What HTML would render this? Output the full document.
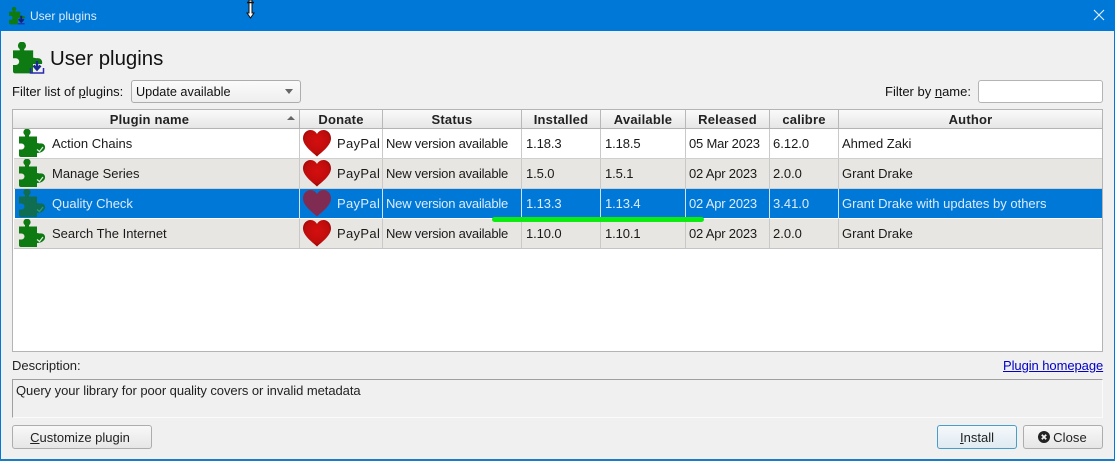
<!DOCTYPE html>
<html><head><meta charset="utf-8"><style>
html,body{margin:0;padding:0}
body{width:1115px;height:461px;overflow:hidden;background:#f0f0f0;font-family:"Liberation Sans",sans-serif;font-size:13px;color:#111;position:relative}
.a{position:absolute;white-space:nowrap}
.t{line-height:16px}
.h{position:absolute;top:110px;height:18px;line-height:20px;text-align:center;font-weight:bold;letter-spacing:.2px;color:#222;background:linear-gradient(#fafafa,#e6e6e6);border-right:1px solid #b8b8b8;box-sizing:border-box}
.r{position:absolute;left:14px;width:1088px;height:30px}
.c{position:absolute;top:0;height:29px;line-height:29px;white-space:nowrap;color:#1a1a1a}
.v{position:absolute;top:0;width:1px;height:30px;background:#c9c9c9}
.s .c{color:#dcecfa}
.s .v{background:#cfe3f5}
.st{letter-spacing:-.21px}
.dt{letter-spacing:-.2px}
.vr{letter-spacing:-.1px}
.pp{letter-spacing:.33px}
.btn{position:absolute;top:425px;height:24px;line-height:23px;text-align:center;box-sizing:border-box;border:1px solid #adadad;border-radius:3px;background:linear-gradient(#f8f8f8,#e6e6e6);color:#222}
u{text-decoration:underline}
</style></head><body>
<svg width="0" height="0" style="position:absolute"><defs>
<path id="pz" d="M0 7.500H6V6.300A3.600 3.600 0 1 1 10 6.300V7.500H18V14L21 14.500C24 14 26.500 16 26 19C25.500 22 22 24 18 24V28H2Q0 28 0 26V20.500H2.500A3 3 0 0 0 2.500 14.500H0Z"/>
<path id="ht" d="M14 26.500C10 22.500 0 16 0 8.200C0 3.400 3.600 0 7.400 0C10.200 0 12.800 1.600 14 4C15.200 1.600 17.800 0 20.600 0C24.400 0 28 3.400 28 8.200C28 16 18 22.500 14 26.500Z"/>
<radialGradient id="hg" cx=".5" cy=".42" r=".6"><stop offset="0" stop-color="#d40f0f"/><stop offset=".7" stop-color="#c00c0c"/><stop offset="1" stop-color="#8f0606"/></radialGradient>
</defs></svg>

<!-- window -->
<div class="a" style="left:0;top:0;width:1115px;height:31px;background:#0078d7"></div>
<div class="a" style="left:0;top:31px;width:1px;height:430px;background:#0078d7"></div>
<div class="a" style="right:0;top:31px;width:1px;height:430px;background:#0078d7"></div>
<div class="a" style="left:0;top:459px;width:1115px;height:2px;background:#1a7cc4"></div>
<svg class="a" style="left:9px;top:7px" width="17" height="18" viewBox="0 0 27 29"><use href="#pz" fill="#0e7a12"/><rect x="14" y="18" width="13" height="11" fill="#0078d7"/><path d="M19.500 14V23M15.500 19.500L19.500 24L23.500 19.500" stroke="#12227a" stroke-width="3" fill="none"/><path d="M14 27H25" stroke="#2a2ab0" stroke-width="2"/></svg>
<div class="a t" style="left:30px;top:8px;font-size:12px;color:#dcecfa">User plugins</div>
<svg class="a" style="left:1093px;top:9px" width="12" height="12" viewBox="0 0 12 12"><path d="M1 1L11 11M11 1L1 11" stroke="#e6f2fb" stroke-width="1.100"/></svg>
<!-- cursor -->
<svg class="a" style="left:245px;top:0" width="11" height="19" viewBox="0 0 11 19"><path d="M4 0V13H2L5.500 18L9 13H7V0Z" fill="#fff" stroke="#111" stroke-width="1"/><path d="M2 2.500H9" stroke="#111" stroke-width="1.500"/></svg>

<!-- heading -->
<svg class="a" style="left:13px;top:42px" width="32" height="32" viewBox="0 0 32 32"><use href="#pz" transform="scale(1.120)" fill="#0e7a12"/><rect x="17" y="22" width="15" height="10" fill="#f0f0f0"/><path d="M18.500 20V31" stroke="#0e7a12" stroke-width="3"/><path d="M24 19V27M20.500 23.500L24 27.500L27.500 23.500" stroke="#1a2a90" stroke-width="2.500" fill="none"/><path d="M17.500 26V31H30.500V26" stroke="#2a2ab0" stroke-width="1.500" fill="none"/></svg>
<div class="a" style="left:50px;top:47px;font-size:20.400px;line-height:24px;color:#111">User plugins</div>

<!-- filters -->
<div class="a t" style="left:12px;top:84px">Filter list of <u>p</u>lugins:</div>
<div class="a" style="left:131px;top:80px;width:170px;height:23px;box-sizing:border-box;border:1px solid #adadad;border-radius:3px;background:linear-gradient(#fbfbfb,#eeeeee);line-height:23px;padding-left:4px;font-size:12.700px">Update available</div>
<div class="a" style="left:285px;top:89px;width:0;height:0;border-left:4px solid transparent;border-right:4px solid transparent;border-top:5px solid #666"></div>
<div class="a t" style="left:885px;top:84px">Filter by <u>n</u>ame:</div>
<div class="a" style="left:978px;top:80px;width:125px;height:23px;box-sizing:border-box;border:1px solid #b4b4b4;border-radius:3px;background:#fff"></div>

<!-- table -->
<div class="a" style="left:12px;top:109px;width:1091px;height:243px;box-sizing:border-box;border:1px solid #b4b4b4;background:#fff"></div>
<div class="h" style="left:13px;width:287px;padding-right:13px">Plugin name</div>
<div class="h" style="left:300px;width:83px">Donate</div>
<div class="h" style="left:383px;width:139px">Status</div>
<div class="h" style="left:522px;width:79px">Installed</div>
<div class="h" style="left:601px;width:85px">Available</div>
<div class="h" style="left:686px;width:84px">Released</div>
<div class="h" style="left:770px;width:69px">calibre</div>
<div class="h" style="left:839px;width:263px;border-right:0">Author</div>
<div class="a" style="left:13px;top:128px;width:1089px;height:1px;background:#b4b4b4"></div>
<div class="a" style="left:287px;top:116px;width:0;height:0;border-left:4px solid transparent;border-right:4px solid transparent;border-bottom:4px solid #666"></div>

<!-- Row 1 -->
<div class="r" style="top:129px;background:#fff">
<div class="c" style="left:38px">Action Chains</div><div class="v" style="left:285px"></div>
<div class="c pp" style="left:323px">PayPal</div><div class="v" style="left:368px"></div>
<div class="c st" style="left:372px">New version available</div><div class="v" style="left:507px"></div>
<div class="c vr" style="left:512px">1.18.3</div><div class="v" style="left:586px"></div>
<div class="c vr" style="left:591px">1.18.5</div><div class="v" style="left:671px"></div>
<div class="c dt" style="left:675px">05 Mar 2023</div><div class="v" style="left:755px"></div>
<div class="c" style="left:759px">6.12.0</div><div class="v" style="left:824px"></div>
<div class="c" style="left:828px">Ahmed Zaki</div>
</div>
<!-- Row 2 -->
<div class="r" style="top:159px;background:#e8e6e3">
<div class="c" style="left:38px">Manage Series</div><div class="v" style="left:285px"></div>
<div class="c pp" style="left:323px">PayPal</div><div class="v" style="left:368px"></div>
<div class="c st" style="left:372px">New version available</div><div class="v" style="left:507px"></div>
<div class="c vr" style="left:512px">1.5.0</div><div class="v" style="left:586px"></div>
<div class="c vr" style="left:591px">1.5.1</div><div class="v" style="left:671px"></div>
<div class="c dt" style="left:675px">02 Apr 2023</div><div class="v" style="left:755px"></div>
<div class="c" style="left:759px">2.0.0</div><div class="v" style="left:824px"></div>
<div class="c" style="left:828px">Grant Drake</div>
</div>
<!-- Row 3 -->
<div class="r s" style="top:189px;height:29px;left:15px;width:1087px;background:#0078d7">
<div class="c" style="left:37px">Quality Check</div><div class="v" style="left:284px"></div>
<div class="c pp" style="left:322px">PayPal</div><div class="v" style="left:367px"></div>
<div class="c st" style="left:371px">New version available</div><div class="v" style="left:506px"></div>
<div class="c vr" style="left:511px">1.13.3</div><div class="v" style="left:585px"></div>
<div class="c vr" style="left:590px">1.13.4</div><div class="v" style="left:670px"></div>
<div class="c dt" style="left:674px">02 Apr 2023</div><div class="v" style="left:754px"></div>
<div class="c" style="left:758px">3.41.0</div><div class="v" style="left:823px"></div>
<div class="c" style="left:827px">Grant Drake with updates by others</div>
</div>
<!-- Row 4 -->
<div class="r" style="top:219px;background:#e8e6e3">
<div class="c" style="left:38px">Search The Internet</div><div class="v" style="left:285px"></div>
<div class="c pp" style="left:323px">PayPal</div><div class="v" style="left:368px"></div>
<div class="c st" style="left:372px">New version available</div><div class="v" style="left:507px"></div>
<div class="c vr" style="left:512px">1.10.0</div><div class="v" style="left:586px"></div>
<div class="c vr" style="left:591px">1.10.1</div><div class="v" style="left:671px"></div>
<div class="c dt" style="left:675px">02 Apr 2023</div><div class="v" style="left:755px"></div>
<div class="c" style="left:759px">2.0.0</div><div class="v" style="left:824px"></div>
<div class="c" style="left:828px">Grant Drake</div>
</div>
<div class="a" style="left:14px;top:158px;width:1088px;height:1px;background:#cfcfcf"></div>
<div class="a" style="left:14px;top:188px;width:1088px;height:1px;background:#cfcfcf"></div>
<div class="a" style="left:14px;top:248px;width:1088px;height:1px;background:#c4c4c4"></div>

<!-- row icons -->
<svg class="a" style="left:19px;top:129px" width="27" height="29" viewBox="0 0 27 29"><use href="#pz" fill="#0e7a12"/><path d="M18 20.500L20.500 22.500L24 18" stroke="#dfeee0" stroke-width="1.200" fill="none"/></svg>
<svg class="a" style="left:19px;top:159px" width="27" height="29" viewBox="0 0 27 29"><use href="#pz" fill="#0e7a12"/><path d="M18 20.500L20.500 22.500L24 18" stroke="#dfeee0" stroke-width="1.200" fill="none"/></svg>
<svg class="a" style="left:19px;top:189px" width="27" height="29" viewBox="0 0 27 29"><use href="#pz" fill="#0f6e52"/><path d="M18 20.500L20.500 22.500L24 18" stroke="#2f9a80" stroke-width="1.200" fill="none"/></svg>
<svg class="a" style="left:19px;top:219px" width="27" height="29" viewBox="0 0 27 29"><use href="#pz" fill="#0e7a12"/><path d="M18 20.500L20.500 22.500L24 18" stroke="#dfeee0" stroke-width="1.200" fill="none"/></svg>
<svg class="a" style="left:303px;top:130px" width="28" height="27" viewBox="0 0 28 27"><use href="#ht" fill="url(#hg)"/></svg>
<svg class="a" style="left:303px;top:160px" width="28" height="27" viewBox="0 0 28 27"><use href="#ht" fill="url(#hg)"/></svg>
<svg class="a" style="left:303px;top:190px" width="28" height="27" viewBox="0 0 28 27"><use href="#ht" fill="#802c52"/></svg>
<svg class="a" style="left:303px;top:220px" width="28" height="27" viewBox="0 0 28 27"><use href="#ht" fill="url(#hg)"/></svg>

<!-- green annotation -->
<div class="a" style="left:492px;top:217px;width:212px;height:5px;border-radius:3px;background:#0cec10"></div>

<!-- description -->
<div class="a t" style="left:12px;top:358px;color:#222">Description:</div>
<div class="a t" style="left:1003px;top:358px;letter-spacing:-.07px;color:#0000c8;text-decoration:underline">Plugin homepage</div>
<div class="a" style="left:12px;top:379px;width:1091px;height:39px;box-sizing:border-box;border:1px solid #fbfbfb;border-top:1px solid #a0a0a0;border-left:1px solid #a0a0a0;background:#f0f0f0"></div>
<div class="a t" style="left:16px;top:383px;letter-spacing:-.06px;color:#222">Query your library for poor quality covers or invalid metadata</div>

<!-- buttons -->
<div class="btn" style="left:12px;width:140px;padding-right:4px"><u>C</u>ustomize plugin</div>
<div class="btn" style="left:937px;width:80px;border-color:#4a9cc9;background:linear-gradient(#f4f8fb,#dfeaf2)"><u>I</u>nstall</div>
<div class="btn" style="left:1023px;width:80px;padding-left:14px;letter-spacing:.1px">Close</div>
<svg class="a" style="left:1038px;top:431px" width="12" height="12" viewBox="0 0 12 12"><circle cx="6" cy="6" r="6" fill="#222"/><path d="M3.800 3.800L8.200 8.200M8.200 3.800L3.800 8.200" stroke="#f0f0f0" stroke-width="1.800"/></svg>
</body></html>
